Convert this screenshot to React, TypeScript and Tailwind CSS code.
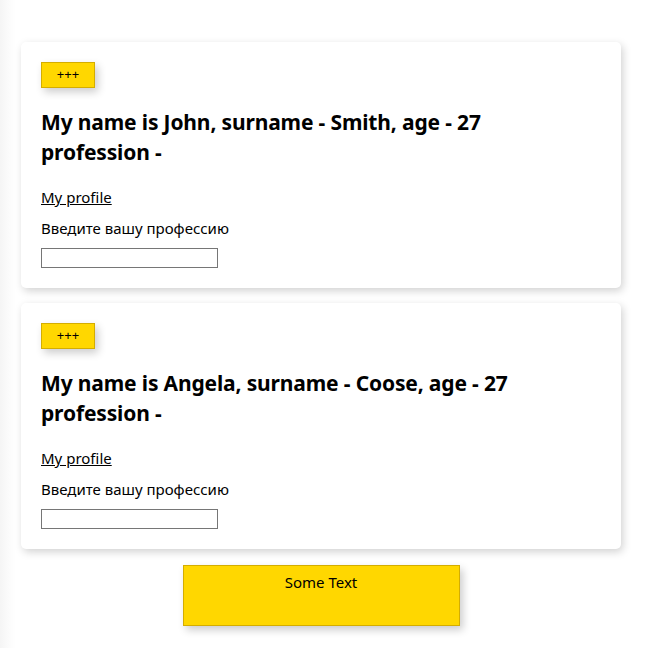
import React from "react";

type Person = { name: string; surname: string; age: number };

const people: Person[] = [
  { name: "John", surname: "Smith", age: 27 },
  { name: "Angela", surname: "Coose", age: 27 },
];

function Card({ p }: { p: Person }) {
  return (
    <div className="flex w-[600px] flex-col items-start rounded-[5px] bg-white px-5 pt-5 pb-5 shadow-[2px_3px_8px_rgba(0,0,0,0.18)]">
      <button className="h-[26px] w-[54px] border border-[#d4ad00] bg-[#ffd700] text-[13px] text-black shadow-[3px_4px_8px_rgba(0,0,0,0.2)]">
        +++
      </button>
      <h2 className="mt-[19px] text-[21px] leading-[30px] font-bold tracking-[-0.15px] text-black">
        My name is {p.name}, surname - {p.surname}, age - {p.age}
        <br />
        profession -
      </h2>
      <a href="#" className="mt-[18px] text-[15px] leading-[24px] text-black underline">
        My profile
      </a>
      <p className="mt-[9px] text-[15px] leading-[20px] text-black">Введите вашу профессию</p>
      <input className="mt-[10px] h-[20px] w-[177px] border border-[#767676] bg-white" />
    </div>
  );
}

export default function App() {
  return (
    <div
      className="min-h-[648px] bg-[linear-gradient(to_right,#f5f5f5,#fcfcfc_10px,#ffffff_16px)] pt-[42px] pl-[21px]"
      style={{ fontFamily: '"Noto Sans", "Open Sans", sans-serif' }}
    >
      <div className="flex w-[600px] flex-col items-center gap-[15px]">
        {people.map((p) => (
          <Card key={p.name} p={p} />
        ))}
        <div className="mt-px flex h-[61px] w-[277px] justify-center border border-[#d4ad00] bg-[#ffd700] pt-[6px] text-[15px] leading-[20px] text-black shadow-[3px_4px_8px_rgba(0,0,0,0.2)]">
          Some Text
        </div>
      </div>
    </div>
  );
}
